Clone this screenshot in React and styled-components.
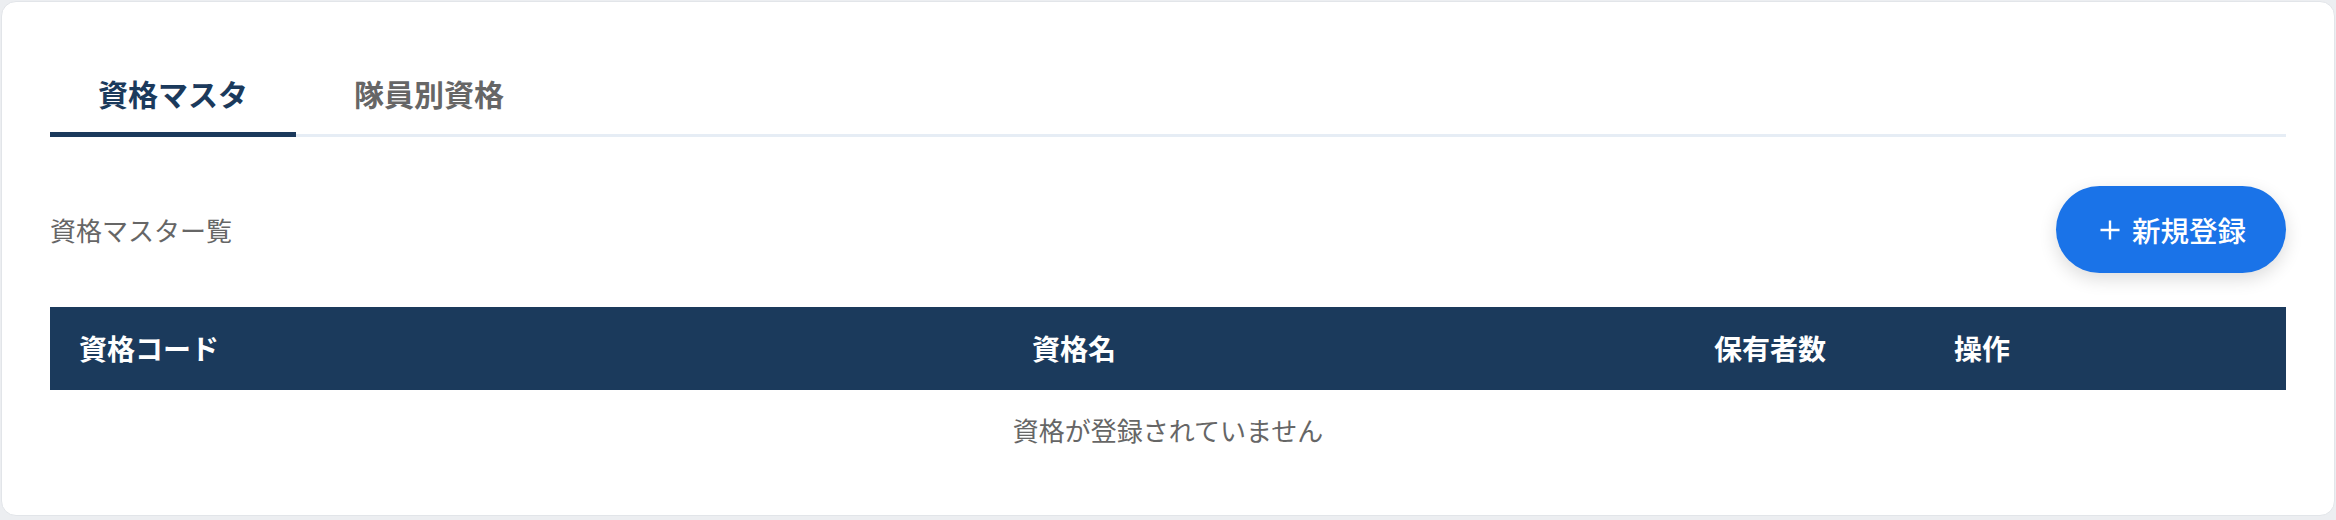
import React, { useState } from "react";
import styled, { createGlobalStyle } from "styled-components";

const GlobalStyle = createGlobalStyle`
  html, body {
    margin: 0;
    padding: 0;
    background: #eceef1;
    font-family: "Noto Sans CJK JP", "Noto Sans", sans-serif;
  }
  #root {
    padding: 1px;
  }
`;

const Card = styled.div`
  background: #ffffff;
  border: 1px solid #e2e5e9;
  border-radius: 15px;
  padding: 48px 48px 46px;
`;

const TabBar = styled.div`
  display: flex;
  gap: 10px;
  border-bottom: 3px solid #e6edf5;
`;

const Tab = styled.button`
  font-family: inherit;
  font-size: 30px;
  font-weight: 700;
  line-height: 45px;
  padding: 21px 48px 16px;
  margin-bottom: -3px;
  background: none;
  border: none;
  border-bottom: 5px solid ${({ active }) => (active ? "#1b3a5c" : "transparent")};
  color: ${({ active }) => (active ? "#1b3a5c" : "#666666")};
  cursor: pointer;
`;

const SectionHead = styled.div`
  display: flex;
  align-items: center;
  justify-content: space-between;
  margin-top: 49px;
`;

const SectionTitle = styled.div`
  font-size: 26px;
  line-height: 39px;
  color: #666666;
`;

const AddButton = styled.button`
  display: flex;
  align-items: center;
  gap: 11px;
  font-family: inherit;
  font-size: 28.5px;
  font-weight: 500;
  line-height: 41px;
  color: #ffffff;
  background: #1a73e8;
  border: none;
  border-radius: 999px;
  padding: 23px 40px 23px 43px;
  box-shadow: 0 6px 18px rgba(0, 0, 0, 0.14);
  cursor: pointer;
`;

const Table = styled.div`
  margin-top: 34px;
`;

const HeadRow = styled.div`
  display: grid;
  grid-template-columns: 953px 682px 240px 1fr;
  background: #1b3a5c;
`;

const HeadCell = styled.div`
  padding: 21px 29px;
  font-size: 28px;
  font-weight: 700;
  line-height: 41px;
  color: #ffffff;
  text-align: left;
`;

const EmptyRow = styled.div`
  padding: 20px 0;
  text-align: center;
  font-size: 26px;
  line-height: 39px;
  color: #666666;
`;

const PlusIcon = () => (
  <svg width="22" height="22" viewBox="0 0 22 22" fill="none">
    <path d="M11 1.5v19M1.5 11h19" stroke="#ffffff" strokeWidth="2.4" />
  </svg>
);

const columns = ["資格コード", "資格名", "保有者数", "操作"];

export default function App() {
  const [tab, setTab] = useState(0);
  return (
    <>
      <GlobalStyle />
      <Card>
        <TabBar>
          <Tab active={tab === 0} onClick={() => setTab(0)}>
            資格マスタ
          </Tab>
          <Tab active={tab === 1} onClick={() => setTab(1)}>
            隊員別資格
          </Tab>
        </TabBar>
        <SectionHead>
          <SectionTitle>資格マスター覧</SectionTitle>
          <AddButton>
            <PlusIcon />
            新規登録
          </AddButton>
        </SectionHead>
        <Table>
          <HeadRow>
            {columns.map((c) => (
              <HeadCell key={c}>{c}</HeadCell>
            ))}
          </HeadRow>
          <EmptyRow>資格が登録されていません</EmptyRow>
        </Table>
      </Card>
    </>
  );
}
